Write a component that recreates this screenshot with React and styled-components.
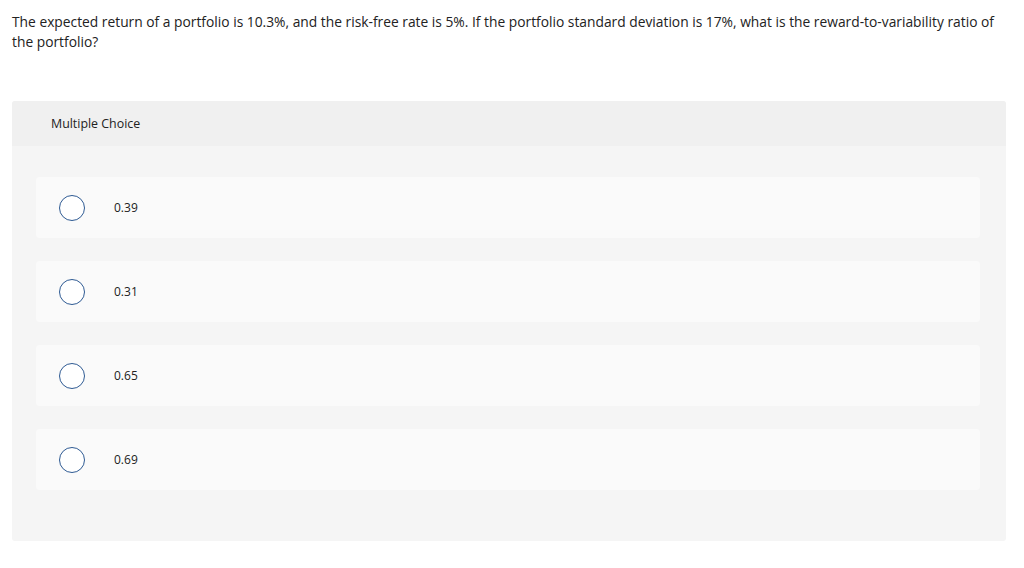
import React from 'react';
import styled, { createGlobalStyle } from 'styled-components';

const GlobalStyle = createGlobalStyle`
  body {
    margin: 0;
    background: #ffffff;
    font-family: "Open Sans", "Liberation Sans", sans-serif;
    color: #222222;
  }
`;

const Page = styled.div`
  padding: 12px 18px 0 12px;
`;

const Question = styled.p`
  margin: 0;
  font-size: 13.8px;
  line-height: 20px;
  color: #222;
`;

const Panel = styled.section`
  margin-top: 49px;
  background: #f5f5f5;
  border-radius: 3px;
  padding-bottom: 51px;
`;

const PanelHeader = styled.div`
  height: 45px;
  display: flex;
  align-items: center;
  padding-left: 39px;
  background: #f0f0f0;
  border-radius: 3px 3px 0 0;
  font-size: 12.4px;
  color: #222;
`;

const Options = styled.div`
  display: flex;
  flex-direction: column;
  gap: 23px;
  padding: 31px 26px 0 24px;
`;

const Option = styled.label`
  height: 61px;
  display: flex;
  align-items: center;
  background: #fafafa;
  border-radius: 4px;
  padding-left: 23px;
  cursor: pointer;
`;

const Radio = styled.span`
  width: 24px;
  height: 24px;
  border: 1.3px solid #2e5a93;
  border-radius: 50%;
  background: #fff;
  flex-shrink: 0;
`;

const OptionText = styled.span`
  margin-left: 29px;
  font-size: 12px;
  color: #222;
`;

const choices = ['0.39', '0.31', '0.65', '0.69'];

export default function App() {
  return (
    <>
      <GlobalStyle />
      <Page>
        <Question>
          The expected return of a portfolio is 10.3%, and the risk-free rate is 5%. If the portfolio standard
          deviation is 17%, what is the reward-to-variability ratio of the portfolio?
        </Question>
        <Panel>
          <PanelHeader>Multiple Choice</PanelHeader>
          <Options>
            {choices.map((c) => (
              <Option key={c}>
                <Radio />
                <OptionText>{c}</OptionText>
              </Option>
            ))}
          </Options>
        </Panel>
      </Page>
    </>
  );
}
